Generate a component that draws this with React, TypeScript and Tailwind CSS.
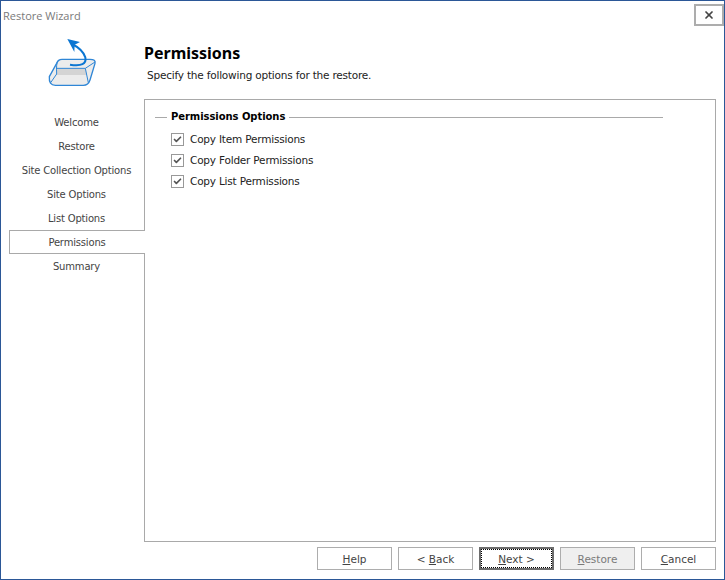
import React from 'react';
import { Check, X } from 'lucide-react';

const steps = ['Welcome', 'Restore', 'Site Collection Options', 'Site Options', 'List Options', 'Permissions', 'Summary'];
const options = ['Copy Item Permissions', 'Copy Folder Permissions', 'Copy List Permissions'];

const RestoreIcon = () => (
  <svg width="70" height="70" viewBox="0 0 210 210" fill="none" className="shrink-0">
    <path d="M28 140 L50 100 Q54 88 66 88 H150 Q168 88 165 100 L150 150 Q145 166 130 166 H46 Q26 166 28 140 Z" fill="#ececec" />
    <path d="M50 115 H136 L140 135 H50 Z" fill="#d4d4d4" />
    <path d="M28 140 L50 100 Q54 88 66 88 H150 Q168 88 165 100 L150 150 Q145 166 130 166 H46 Q26 166 28 140 Z" stroke="#2f86d6" strokeWidth="4" strokeLinejoin="round" />
    <path d="M54 92 Q48 100 50 132 L32 158 M50 115 H136 L165 96 M136 115 L145 158" stroke="#2f86d6" strokeWidth="3" />
    <path d="M90 104 Q142 112 136 82 Q128 58 96 42" stroke="#0b76d2" strokeWidth="6" />
    <path d="M82 27 L120 36 L104 44 L103 66 Z" fill="#0b76d2" />
  </svg>
);

const WizardButton = ({ children, disabled, focused }: { children: React.ReactNode; disabled?: boolean; focused?: boolean }) => (
  <button
    type="button"
    className={`h-[23px] w-[75px] flex items-center justify-center pt-[2px] text-[10.5px] ${
      disabled
        ? 'border border-[#adadad] bg-[#efefef] text-[#7a7a7a]'
        : focused
          ? 'border-2 border-[#6d6d6d] bg-white text-[#444444] outline-1 outline-dotted outline-black -outline-offset-3'
          : 'border border-[#adadad] bg-white text-[#444444]'
    }`}
  >
    {children}
  </button>
);

export default function App() {
  return (
    <div className="w-[725px] h-[580px] flex flex-col bg-white border border-[#2b5797] font-['DejaVu_Sans',sans-serif] text-[#444444] overflow-hidden">
      <div className="h-[29px] flex shrink-0 justify-between pl-[2px]">
        <span className="mt-[6px] font-['Open_Sans',sans-serif] text-[11px] leading-[18px] text-[#7a7a7a]">Restore Wizard</span>
        <button type="button" className="mt-[3px] w-[30px] h-[22px] border-2 border-[#adadad] flex items-center justify-center text-[#444444]">
          <X size={12} strokeWidth={3.5} />
        </button>
      </div>

      <div className="h-[69px] flex shrink-0">
        <div className="w-[143px] pl-[39px]">
          <RestoreIcon />
        </div>
        <div>
          <h1 className="mt-[12px] font-['Noto_Sans',sans-serif] font-bold text-[16px] leading-[22px] text-black">Permissions</h1>
          <p className="mt-[3px] ml-[3px] text-[10.5px] tracking-[-0.2px] leading-[16px] text-[#222222]">Specify the following options for the restore.</p>
        </div>
      </div>

      <div className="flex-1 min-h-0 flex">
        <div className="w-[144px] pl-[8px] flex flex-col shrink-0">
          <div className="h-[11px] border-r border-[#a9a9a9]" />
          {steps.map((step) => (
            <div
              key={step}
              className={
                step === 'Permissions'
                  ? 'h-[24px] flex items-center justify-center text-[10px] tracking-[-0.18px] border-y border-l border-[#a9a9a9] pr-px'
                  : 'h-[24px] flex items-center justify-center text-[10px] tracking-[-0.18px] border-r border-[#a9a9a9]'
              }
            >
              {step}
            </div>
          ))}
          <div className="flex-1 border-r border-[#a9a9a9]" />
        </div>

        <div className="flex-1 mr-[8px] border-y border-r border-[#a9a9a9] pl-[10px] pt-[10px]">
          <div className="w-[508px] flex items-center gap-[4px]">
            <div className="w-[12px] h-px bg-[#a9a9a9]" />
            <h2 className="font-bold text-[10px] tracking-[-0.06px] leading-[14px] text-black">Permissions Options</h2>
            <div className="flex-1 h-px bg-[#a9a9a9]" />
          </div>
          <div className="mt-[9px] ml-[16px] flex flex-col gap-[8px]">
            {options.map((option) => (
              <label key={option} className="h-[13px] flex items-center gap-[6px] text-[10.5px] tracking-[-0.2px] text-[#222222]">
                <span className="w-[13px] h-[13px] border border-[#999999] flex items-center justify-center">
                  <Check size={9} strokeWidth={4.5} className="text-[#555555]" />
                </span>
                {option}
              </label>
            ))}
          </div>
        </div>
      </div>

      <div className="h-[37px] shrink-0 flex justify-end items-start gap-[6px] pt-[5px] pr-[8px]">
        <WizardButton><span><u>H</u>elp</span></WizardButton>
        <WizardButton><span>&lt; <u>B</u>ack</span></WizardButton>
        <WizardButton focused><span><u>N</u>ext &gt;</span></WizardButton>
        <WizardButton disabled><span><u>R</u>estore</span></WizardButton>
        <WizardButton><span><u>C</u>ancel</span></WizardButton>
      </div>
    </div>
  );
}
